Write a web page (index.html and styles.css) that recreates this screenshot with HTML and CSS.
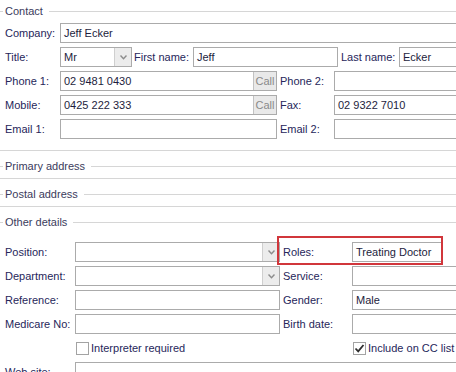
FILE: index.html
```html
<!DOCTYPE html>
<html lang="en">
<head>
    <meta charset="UTF-8">
    <title>Contact details</title>
    <link rel="stylesheet" href="styles.css">
</head>
<body>
    <div class="form">
        <section class="group contact">
            <div class="legend"><span>Contact</span></div>
            <div class="rows">
                <div class="row">
                    <div class="lbl lbl-c">Company:</div>
                    <div class="field grow">Jeff Ecker</div>
                </div>
                <div class="row">
                    <div class="lbl lbl-c">Title:</div>
                    <div class="field select title-select">
                        <span class="value">Mr</span>
                        <span class="arrow"><svg width="7" height="5" viewBox="0 0 7 5"><polyline points="0.5,0.5 3.5,3.8 6.5,0.5" fill="none" stroke="#8c8c8c" stroke-width="1.4"/></svg></span>
                    </div>
                    <div class="lbl lbl-first">First name:</div>
                    <div class="field first-name">Jeff</div>
                    <div class="lbl lbl-last">Last name:</div>
                    <div class="field grow">Ecker</div>
                </div>
                <div class="row">
                    <div class="lbl lbl-c">Phone 1:</div>
                    <div class="field phone">
                        <span class="value">02 9481 0430</span>
                        <span class="call">Call</span>
                    </div>
                    <div class="lbl lbl-c2">Phone 2:</div>
                    <div class="field grow"></div>
                </div>
                <div class="row">
                    <div class="lbl lbl-c">Mobile:</div>
                    <div class="field phone">
                        <span class="value">0425 222 333</span>
                        <span class="call">Call</span>
                    </div>
                    <div class="lbl lbl-c2">Fax:</div>
                    <div class="field grow">02 9322 7010</div>
                </div>
                <div class="row">
                    <div class="lbl lbl-c">Email 1:</div>
                    <div class="field phone"></div>
                    <div class="lbl lbl-c2">Email 2:</div>
                    <div class="field grow"></div>
                </div>
            </div>
        </section>

        <section class="group">
            <div class="legend"><span>Primary address</span></div>
        </section>

        <section class="group">
            <div class="legend"><span>Postal address</span></div>
        </section>

        <section class="group other">
            <div class="legend"><span>Other details</span></div>
            <div class="rows">
                <div class="row">
                    <div class="lbl lbl-o">Position:</div>
                    <div class="field select wide">
                        <span class="value"></span>
                        <span class="arrow"><svg width="7" height="5" viewBox="0 0 7 5"><polyline points="0.5,0.5 3.5,3.8 6.5,0.5" fill="none" stroke="#8c8c8c" stroke-width="1.4"/></svg></span>
                    </div>
                    <div class="highlight">
                        <div class="lbl lbl-o2">Roles:</div>
                        <div class="field roles">Treating Doctor</div>
                    </div>
                </div>
                <div class="row">
                    <div class="lbl lbl-o">Department:</div>
                    <div class="field select wide">
                        <span class="value"></span>
                        <span class="arrow"><svg width="7" height="5" viewBox="0 0 7 5"><polyline points="0.5,0.5 3.5,3.8 6.5,0.5" fill="none" stroke="#8c8c8c" stroke-width="1.4"/></svg></span>
                    </div>
                    <div class="lbl lbl-o2 gap">Service:</div>
                    <div class="field grow"></div>
                </div>
                <div class="row">
                    <div class="lbl lbl-o">Reference:</div>
                    <div class="field wide"></div>
                    <div class="lbl lbl-o2 gap">Gender:</div>
                    <div class="field grow">Male</div>
                </div>
                <div class="row">
                    <div class="lbl lbl-o">Medicare No:</div>
                    <div class="field wide"></div>
                    <div class="lbl lbl-o2 gap">Birth date:</div>
                    <div class="field grow"></div>
                </div>
                <div class="row">
                    <div class="lbl lbl-o"></div>
                    <div class="check-cell wide">
                        <span class="box"></span>
                        <span>Interpreter required</span>
                    </div>
                    <div class="lbl lbl-o2 gap"></div>
                    <div class="check-cell">
                        <span class="box"><svg width="11" height="11" viewBox="0 0 11 11"><polyline points="1.5,5.5 4.2,8.3 9.5,2" fill="none" stroke="#2e2e2e" stroke-width="1.8"/></svg></span>
                        <span>Include on CC list</span>
                    </div>
                </div>
                <div class="row">
                    <div class="lbl lbl-o">Web site:</div>
                    <div class="field grow"></div>
                </div>
            </div>
        </section>
    </div>
</body>
</html>
```

FILE: styles.css
```css
html, body {
    margin: 0;
    overflow: hidden;
    background: #fff;
}
body {
    font-family: "Liberation Sans", Arial, sans-serif;
    font-size: 11px;
    color: #26265a;
}
.form { width: 520px; }

.group {
    padding: 4px 0 1px;
    border-bottom: 1px solid #d6d6d6;
}
.group.contact { padding: 0 0 11px; }
.group.other { border-bottom: none; }

.legend {
    display: flex;
    height: 22px;
    line-height: 22px;
    color: #3b3b5c;
}
.legend::before,
.legend::after {
    content: "";
    height: 0;
    margin-top: 11px;
    border-top: 1px solid #d6d6d6;
}
.legend::before { width: 3px; }
.legend::after { flex: 1; }
.legend span { padding: 0 6px 0 2px; }

.rows {
    display: flex;
    flex-direction: column;
    gap: 4px;
    padding-top: 1px;
}
.other .rows { padding-top: 9px; }

.row {
    display: flex;
    align-items: center;
    height: 20px;
    padding-left: 5px;
}
.lbl {
    flex: none;
    white-space: nowrap;
    line-height: 20px;
}
.lbl-c { width: 55px; }
.lbl-first { width: 59px; margin-left: 2px; }
.lbl-last { width: 58px; margin-left: 3px; }
.lbl-c2 { width: 54px; margin-left: 3px; }
.lbl-o { width: 70px; }
.lbl-o2 { width: 69px; }
.lbl-o2.gap { margin-left: 3px; }

.field {
    flex: none;
    box-sizing: border-box;
    height: 20px;
    border: 1px solid #ababab;
    padding: 0 3px;
    line-height: 18px;
    color: #1d1d3d;
    background: #fff;
    white-space: nowrap;
    overflow: hidden;
}
.grow { flex: 1; }
.first-name { width: 145px; }
.phone { width: 217px; }
.wide { width: 205px; }
.title-select { width: 72px; }

.select, .phone {
    display: flex;
    padding: 0;
}
.select .value, .phone .value {
    flex: 1;
    padding-left: 3px;
}
.arrow {
    width: 17px;
    box-sizing: border-box;
    border-left: 1px solid #cfcfcf;
    background: #ececec;
    display: flex;
    align-items: center;
    justify-content: center;
}
.call {
    width: 23px;
    box-sizing: border-box;
    border-left: 1px solid #c2c2c2;
    background: #e9e9e9;
    color: #8a8a8a;
    text-align: center;
}

.highlight {
    position: relative;
    display: flex;
    align-items: center;
    margin-left: 3px;
}
.highlight::after {
    content: "";
    position: absolute;
    left: -6px;
    top: -6px;
    right: -1px;
    bottom: -3px;
    border: 2px solid #d1363b;
}
.roles { width: 90px; }

.check-cell {
    display: flex;
    align-items: center;
    gap: 2px;
    height: 20px;
    flex: none;
}
.box {
    width: 13px;
    height: 13px;
    box-sizing: border-box;
    margin-left: 1px;
    border: 1px solid #a3a3a3;
    background: #fff;
    display: flex;
    align-items: center;
    justify-content: center;
}
```
